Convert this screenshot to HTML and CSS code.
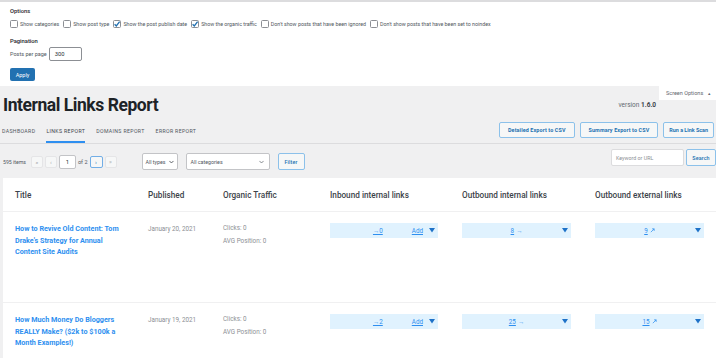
FILE: index.html
```html
<!DOCTYPE html>
<html>
<head>
<meta charset="utf-8">
<link rel="stylesheet" href="styles.css">
</head>
<body>
<div class="options">
  <div class="opt-title">Options</div>
  <div class="checks">
    <label class="chk"><span class="box"></span>Show categories</label>
    <label class="chk"><span class="box"></span>Show post type</label>
    <label class="chk"><span class="box on"><svg viewBox="0 0 8 8" width="8" height="8"><path d="M1.6 4.2 L3.3 5.9 L6.6 1.6" fill="none" stroke="#2271b1" stroke-width="1.3"/></svg></span>Show the post publish date</label>
    <label class="chk"><span class="box on"><svg viewBox="0 0 8 8" width="8" height="8"><path d="M1.6 4.2 L3.3 5.9 L6.6 1.6" fill="none" stroke="#2271b1" stroke-width="1.3"/></svg></span>Show the organic traffic</label>
    <label class="chk"><span class="box"></span>Don't show posts that have been ignored</label>
    <label class="chk"><span class="box"></span>Don't show posts that have been set to noindex</label>
  </div>
  <div class="opt-title pag">Pagination</div>
  <div class="perpage">Posts per page <span class="num-input">300</span></div>
  <div class="apply">Apply</div>
</div>
<div class="screen-row"><div class="screen-tab">Screen Options <span class="up">▲</span></div></div>
<div class="header">
  <h1>Internal Links Report</h1>
  <div class="version">version <b>1.6.0</b></div>
</div>
<div class="nav">
  <div class="tabs">
    <span class="tab">Dashboard</span>
    <span class="tab active">Links Report</span>
    <span class="tab">Domains Report</span>
    <span class="tab">Error Report</span>
  </div>
  <div class="actions">
    <span class="btn wide">Detailed Export to CSV</span>
    <span class="btn wide">Summary Export to CSV</span>
    <span class="btn scan">Run a Link Scan</span>
  </div>
</div>
<div class="toolbar">
  <div class="left">
    <span class="items">595 items</span>
    <span class="pg">«</span>
    <span class="pg">‹</span>
    <span class="pg-input">1</span>
    <span class="of">of 2</span>
    <span class="pg cur">›</span>
    <span class="pg">»</span>
    <span class="select sel-types">All types <svg class="chev" viewBox="0 0 6 4" width="5" height="4"><path d="M0.5 0.7 L3 3.2 L5.5 0.7" fill="none" stroke="#3c434a" stroke-width="1"/></svg></span>
    <span class="select sel-cats">All categories <svg class="chev" viewBox="0 0 6 4" width="5" height="4"><path d="M0.5 0.7 L3 3.2 L5.5 0.7" fill="none" stroke="#50575e" stroke-width="0.8"/></svg></span>
    <span class="btn filter">Filter</span>
  </div>
  <div class="search">
    <span class="search-input">Keyword or URL</span>
    <span class="btn search-btn">Search</span>
  </div>
</div>
<div class="table">
  <div class="th">Title</div>
  <div class="th">Published</div>
  <div class="th">Organic Traffic</div>
  <div class="th">Inbound internal links</div>
  <div class="th">Outbound internal links</div>
  <div class="th">Outbound external links</div>

  <div class="td title"><a>How to Revive Old Content: Tom Drake's Strategy for Annual Content Site Audits</a></div>
  <div class="td date">January 20, 2021</div>
  <div class="td traffic">Clicks: 0<br>AVG Position: 0</div>
  <div class="td"><div class="lbox inb"><a class="cnt">→0</a><a class="add">Add</a><svg class="tri" viewBox="0 0 6 5" width="6" height="5"><path d="M0 0 H6 L3 4.5 Z" fill="#1e72c8"/></svg></div></div>
  <div class="td"><div class="lbox"><span class="sp"></span><span class="mid"><a class="cnt">8</a> →</span><svg class="tri" viewBox="0 0 6 5" width="6" height="5"><path d="M0 0 H6 L3 4.5 Z" fill="#1e72c8"/></svg></div></div>
  <div class="td"><div class="lbox"><span class="sp"></span><span class="mid"><a class="cnt">9</a> <svg viewBox="0 0 6 6" width="5" height="5"><path d="M1 5 L5 1 M2.5 1 H5 V3.5" fill="none" stroke="#2e8ff0" stroke-width="0.9"/></svg></span><svg class="tri" viewBox="0 0 6 5" width="6" height="5"><path d="M0 0 H6 L3 4.5 Z" fill="#1e72c8"/></svg></div></div>

  <div class="td title"><a>How Much Money Do Bloggers REALLY Make? ($2k to $100k a Month Examples!)</a></div>
  <div class="td date">January 19, 2021</div>
  <div class="td traffic">Clicks: 0<br>AVG Position: 0</div>
  <div class="td"><div class="lbox inb"><a class="cnt">→2</a><a class="add">Add</a><svg class="tri" viewBox="0 0 6 5" width="6" height="5"><path d="M0 0 H6 L3 4.5 Z" fill="#1e72c8"/></svg></div></div>
  <div class="td"><div class="lbox"><span class="sp"></span><span class="mid"><a class="cnt">25</a> →</span><svg class="tri" viewBox="0 0 6 5" width="6" height="5"><path d="M0 0 H6 L3 4.5 Z" fill="#1e72c8"/></svg></div></div>
  <div class="td"><div class="lbox"><span class="sp"></span><span class="mid"><a class="cnt">15</a> <svg viewBox="0 0 6 6" width="5" height="5"><path d="M1 5 L5 1 M2.5 1 H5 V3.5" fill="none" stroke="#2e8ff0" stroke-width="0.9"/></svg></span><svg class="tri" viewBox="0 0 6 5" width="6" height="5"><path d="M0 0 H6 L3 4.5 Z" fill="#1e72c8"/></svg></div></div>
</div>
</body>
</html>
```
FILE: styles.css
```css
* { box-sizing: border-box; }
body {
  margin: 0;
  background: #f0f0f1;
  font-family: Roboto, "Noto Sans", sans-serif;
  color: #3c434a;
  overflow: hidden;
}
.options {
  background: #fff;
  border-top: 2px solid #dcdcde;
  padding: 5px 10px 5px;
  height: 86px;
}
.opt-title {
  font-size: 5.8px;
  line-height: 8px;
  font-weight: 500;
  color: #1d2327;
}
.checks {
  display: flex;
  margin-top: 5px;
  height: 8px;
  align-items: center;
  font-size: 5.3px;
  color: #50575e;
}
.chk { display: flex; align-items: center; margin-right: 4px; white-space: nowrap; }
.box {
  width: 8px; height: 8px;
  border: 1px solid #8c8f94;
  border-radius: 1.5px;
  margin-right: 2px;
  background: #fff;
  position: relative;
  display: inline-block;
}
.box svg { position: absolute; left: -1px; top: -1px; }
.pag { margin-top: 9px; }
.perpage {
  margin-top: 2px;
  display: flex;
  align-items: center;
  font-size: 5.5px;
  color: #50575e;
}
.num-input {
  margin-left: 2px;
  width: 33px; height: 14px;
  border: 1px solid #8c8f94;
  border-radius: 2px;
  padding-left: 5px;
  display: flex; align-items: center;
  color: #2c3338;
  font-size: 5.8px;
}
.apply {
  margin-top: 7px;
  width: 25px; height: 13px;
  background: #2271b1;
  border-radius: 2px;
  color: #fff;
  font-size: 5.5px;
  display: flex; align-items: center; justify-content: center;
}
.screen-row { display: flex; justify-content: flex-end; height: 14px; }
.screen-tab {
  width: 57px;
  background: #fff;
  font-size: 5.5px;
  color: #646970;
  display: flex; align-items: center; padding-left: 7px;
}
.screen-tab .up { font-size: 4px; margin-left: 4px; color: #646970; }
.header {
  margin-top: -7px;
  display: flex;
  align-items: center;
  justify-content: space-between;
  padding: 0 60px 0 3px;
  height: 22px;
}
h1 {
  margin: 0;
  font-size: 17.5px;
  line-height: 22px;
  font-weight: 700;
  color: #1d2327;
  letter-spacing: -0.45px;
  padding-top: 2px;
}
.version { font-size: 6.5px; color: #646970; margin-top: 2px; }
.version b { color: #3c434a; font-weight: 700; }
.nav {
  display: flex;
  justify-content: space-between;
  align-items: flex-end;
  border-bottom: 1px solid #dcdcde;
  height: 29px;
}
.tabs { display: flex; padding-left: 2px; }
.tab {
  font-size: 5.2px;
  letter-spacing: 0.35px;
  text-transform: uppercase;
  color: #50575e;
  line-height: 8px;
  padding-bottom: 6px;
  border-bottom: 2px solid transparent;
  margin-right: 11px;
}
.tab.active { border-bottom-color: #2e8ff0; color: #3c434a; }
.actions { display: flex; gap: 5px; margin-bottom: 5px; padding-right: 2px; }
.btn {
  height: 16px;
  border: 1px solid #8cc1ea;
  border-radius: 2px;
  background: #f6f7f7;
  color: #2271b1;
  font-size: 5.4px;
  letter-spacing: 0.12px;
  font-weight: 700;
  display: flex; align-items: center;
  padding: 0 6px;
  white-space: nowrap;
}
.actions .btn.wide { padding: 0 8px; }
.actions .btn.scan { padding: 0 5px; letter-spacing: 0; }
.toolbar {
  display: flex;
  justify-content: space-between;
  align-items: flex-start;
  height: 34px;
  padding: 0 0 0 3px;
}
.left { display: flex; align-items: center; margin-top: 9px; }
.items { font-size: 5.2px; color: #50575e; margin-right: 5px; }
.pg {
  width: 12px; height: 12px;
  border: 1px solid #e5e5e7;
  background: #f6f7f7;
  border-radius: 2px;
  font-size: 6px;
  color: #a7aaad;
  display: flex; align-items: center; justify-content: center;
  margin-right: 2px;
}
.pg.cur { border-color: #72aee6; color: #2271b1; width: 13px; }
.pg-input {
  width: 17px; height: 14px;
  border: 1px solid #c3c4c7;
  border-radius: 2px;
  background: #fff;
  font-size: 6px;
  display: flex; align-items: center; justify-content: center;
  color: #2c3338;
}
.of { font-size: 5.5px; color: #50575e; margin: 0 2px; }
.select {
  height: 17px;
  border: 1px solid #c3c4c7;
  border-radius: 2px;
  background: #fff;
  font-size: 5.3px;
  color: #50575e;
  display: flex; align-items: center;
  padding: 0 4px;
  white-space: nowrap;
}
.sel-types { width: 36px; margin-left: 23px; padding: 0 3px; }
.sel-types .chev { margin-left: 3px; }
.sel-cats { width: 84px; margin-left: 8px; justify-content: space-between; padding-right: 5px; }
.filter { height: 17px; margin-left: 8px; font-weight: 500; padding: 0 6px; }
.search { display: flex; align-items: center; margin-top: 5px; gap: 2px; }
.search-input {
  width: 73px; height: 17px;
  border: 1px solid #dcdcde;
  border-radius: 2px;
  background: #fff;
  font-size: 5.3px;
  color: #8c8f94;
  display: flex; align-items: center; padding-left: 4px;
}
.search-btn { height: 17px; padding: 0 7px; font-weight: 500; width: 30px; justify-content: center; }
.table {
  margin-left: 3px;
  background: #fff;
  display: grid;
  grid-template-columns: 133px 75px 107px 132px 133px 1fr;
}
.th {
  height: 34px;
  display: flex; align-items: center;
  padding-left: 12px;
  font-size: 8.2px;
  font-weight: 500;
  color: #3c434a;
  border-bottom: 1px solid #f0f0f1;
}
.td {
  height: 91px;
  padding: 11px 12px 0 12px;
  border-bottom: 1px solid #f0f0f1;
  font-size: 6.3px;
  color: #8c8f94;
}
.td.title { padding-right: 10px; }
.td.title a {
  color: #2e8ff0;
  font-weight: 700;
  font-size: 7.2px;
  line-height: 11.6px;
  display: block;
}
.td.date { line-height: 10px; padding-top: 12px; }
.td.traffic { line-height: 13px; padding-top: 10px; }
.lbox {
  height: 15px;
  background: #e0f2fe;
  display: flex; align-items: center;
  padding: 0 3px;
  color: #2e8ff0;
  font-size: 6.3px;
}
.lbox a { text-decoration: underline; color: #2e8ff0; }
.lbox .sp { width: 6px; }
.lbox .mid { flex: 1; text-align: center; display: flex; align-items: center; justify-content: center; gap: 2px; }
.lbox.inb { justify-content: flex-end; }
.lbox.inb .add { margin-left: 29px; margin-right: 6px; }
.tri { display: block; }
```
